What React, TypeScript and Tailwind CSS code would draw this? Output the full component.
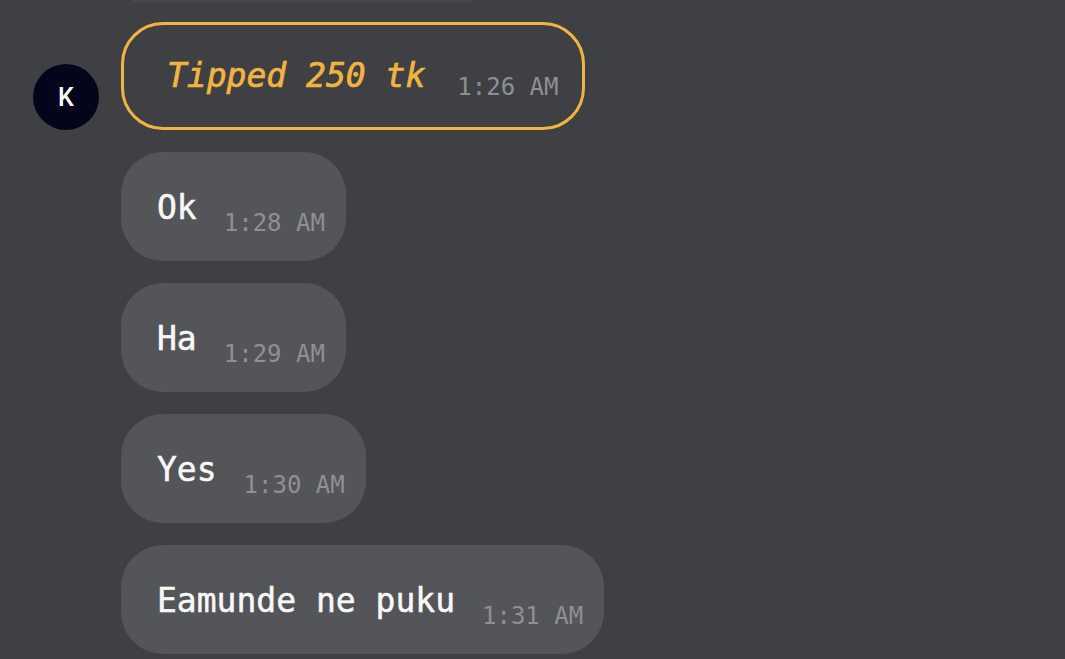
import React from "react";

const mono = "font-['DejaVu_Sans_Mono',monospace]";

function Bubble({ text, time }: { text: string; time: string }) {
  return (
    <div className="flex items-start self-start rounded-[42px] bg-[#545558] pl-[36px] pr-[21px] pt-[36px] pb-[26px]">
      <span className={`${mono} text-[33px] leading-[40px] text-[#f8f8f8] whitespace-pre [-webkit-text-stroke:0.5px_#f8f8f8]`}>{text}</span>
      <span className={`${mono} ml-[27px] mt-[23px] text-[24px] leading-[24px] text-[#8f9093] whitespace-pre`}>{time}</span>
    </div>
  );
}

export default function App() {
  return (
    <div className="w-[1065px] h-[659px] overflow-hidden bg-[#3f4044]">
      <div className="ml-[132px] h-[2px] w-[340px] bg-[#47484c]" />
      <div className="flex flex-col gap-[22px] pt-[20px] pl-[33px]">
        <div className="flex items-end gap-[22px]">
          <div className="flex h-[66px] w-[66px] shrink-0 items-center justify-center rounded-full bg-[#03051b]">
            <span className="font-['Roboto',Arial,sans-serif] font-medium text-[25px] leading-none text-white">K</span>
          </div>
          <div className="flex items-start rounded-[42px] border-[3px] border-[#f2b440] pl-[43px] pr-[24px] pt-[31px] pb-[28px]">
            <span className={`${mono} italic text-[33px] leading-[40px] text-[#f2b440] whitespace-pre [-webkit-text-stroke:0.7px_#f2b440]`}>Tipped 250 tk</span>
            <span className={`${mono} ml-[32px] mt-[19px] text-[24px] leading-[24px] text-[#8f9093] whitespace-pre`}>1:26 AM</span>
          </div>
        </div>
        <div className="flex flex-col items-start gap-[22px] pl-[88px]">
          <Bubble text="Ok" time="1:28 AM" />
          <Bubble text="Ha" time="1:29 AM" />
          <Bubble text="Yes" time="1:30 AM" />
          <Bubble text="Eamunde ne puku" time="1:31 AM" />
        </div>
      </div>
    </div>
  );
}
